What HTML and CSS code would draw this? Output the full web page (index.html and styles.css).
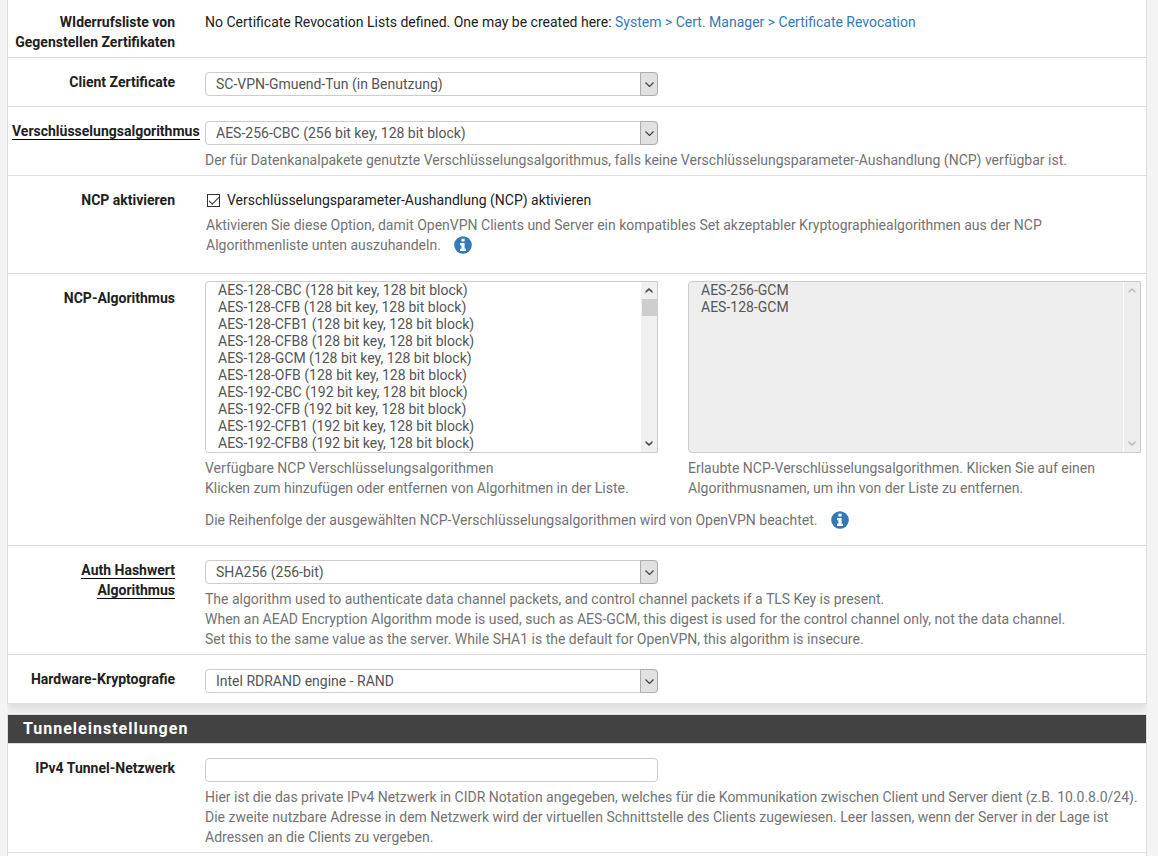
FILE: index.html
```html
<!DOCTYPE html>
<html lang="de">
<head>
<meta charset="utf-8">
<meta name="viewport" content="width=device-width, initial-scale=1">
<title>OpenVPN Client</title>
<link rel="stylesheet" href="styles.css">
</head>
<body>
<svg class="defs" aria-hidden="true">
  <symbol id="chevron" viewBox="0 0 9 5"><path d="M0.5 0.5 4.5 4.5 8.5 0.5" fill="none" stroke="currentColor" stroke-width="1.2"/></symbol>
  <symbol id="scroll-up" viewBox="0 0 8 6"><path d="M0.5 5.2V3L4 0 7.5 3V5.2L4 2.3Z" fill="currentColor"/></symbol>
  <symbol id="scroll-down" viewBox="0 0 8 6"><path d="M0.5 0.8V3L4 6 7.5 3V0.8L4 3.7Z" fill="currentColor"/></symbol>
  <symbol id="info" viewBox="0 0 18 18"><circle cx="9" cy="9" r="8.8" fill="#337ab7"/><path d="M7.4 2.8h3.2v2.6H7.4ZM6 7h4.6v5.7H12V15H6v-2.3h1.4V9.2H6Z" fill="#fff"/></symbol>
</svg>
<form class="page">
  <section class="panel panel-continued">
    <div class="row">
      <div class="name">WIderrufsliste von Gegenstellen Zertifikaten</div>
      <div class="field field-text">No Certificate Revocation Lists defined. One may be created here: <a href="#">System &gt; Cert. Manager &gt; Certificate Revocation</a></div>
    </div>
    <div class="row">
      <label class="name" for="cert">Client Zertificate</label>
      <div class="field">
        <div class="dropdown"><select id="cert"><option>SC-VPN-Gmuend-Tun (in Benutzung)</option></select><span class="arrow"><svg><use href="#chevron"/></svg></span></div>
      </div>
    </div>
    <div class="row">
      <label class="name" for="cipher"><span class="required">Verschlüsselungsalgorithmus</span></label>
      <div class="field">
        <div class="dropdown"><select id="cipher"><option>AES-256-CBC (256 bit key, 128 bit block)</option></select><span class="arrow"><svg><use href="#chevron"/></svg></span></div>
        <p class="help">Der für Datenkanalpakete genutzte Verschlüsselungsalgorithmus, falls keine Verschlüsselungsparameter-Aushandlung (NCP) verfügbar ist.</p>
      </div>
    </div>
    <div class="row">
      <div class="name">NCP aktivieren</div>
      <div class="field">
        <label class="check"><input type="checkbox" checked>Verschlüsselungsparameter-Aushandlung (NCP) aktivieren</label>
        <p class="help help-end">Aktivieren Sie diese Option, damit OpenVPN Clients und Server ein kompatibles Set akzeptabler Kryptographiealgorithmen aus der NCP Algorithmenliste unten auszuhandeln. <button type="button" class="info" aria-label="Info"><svg><use href="#info"/></svg></button></p>
      </div>
    </div>
    <div class="row">
      <div class="name">NCP-Algorithmus</div>
      <div class="field field-lists">
        <div class="lists">
          <div>
            <div class="listbox">
              <select id="available" multiple size="10">
                <option>AES-128-CBC (128 bit key, 128 bit block)</option>
                <option>AES-128-CFB (128 bit key, 128 bit block)</option>
                <option>AES-128-CFB1 (128 bit key, 128 bit block)</option>
                <option>AES-128-CFB8 (128 bit key, 128 bit block)</option>
                <option>AES-128-GCM (128 bit key, 128 bit block)</option>
                <option>AES-128-OFB (128 bit key, 128 bit block)</option>
                <option>AES-192-CBC (192 bit key, 128 bit block)</option>
                <option>AES-192-CFB (192 bit key, 128 bit block)</option>
                <option>AES-192-CFB1 (192 bit key, 128 bit block)</option>
                <option>AES-192-CFB8 (192 bit key, 128 bit block)</option>
              </select>
              <div class="scrollbar"><svg><use href="#scroll-up"/></svg><span class="thumb"></span><svg><use href="#scroll-down"/></svg></div>
            </div>
            <label class="help" for="available">Verfügbare NCP Verschlüsselungsalgorithmen<br>Klicken zum hinzufügen oder entfernen von Algorhitmen in der Liste.</label>
          </div>
          <div>
            <div class="listbox listbox-readonly">
              <select id="allowed" multiple size="10">
                <option>AES-256-GCM</option>
                <option>AES-128-GCM</option>
              </select>
              <div class="scrollbar"><svg><use href="#scroll-up"/></svg><svg><use href="#scroll-down"/></svg></div>
            </div>
            <label class="help" for="allowed">Erlaubte NCP-Verschlüsselungsalgorithmen. Klicken Sie auf einen Algorithmusnamen, um ihn von der Liste zu entfernen.</label>
          </div>
        </div>
        <p class="help help-note">Die Reihenfolge der ausgewählten NCP-Verschlüsselungsalgorithmen wird von OpenVPN beachtet. <button type="button" class="info" aria-label="Info"><svg><use href="#info"/></svg></button></p>
      </div>
    </div>
    <div class="row">
      <label class="name" for="digest"><span class="required">Auth Hashwert Algorithmus</span></label>
      <div class="field">
        <div class="dropdown"><select id="digest"><option>SHA256 (256-bit)</option></select><span class="arrow"><svg><use href="#chevron"/></svg></span></div>
        <p class="help">The algorithm used to authenticate data channel packets, and control channel packets if a TLS Key is present.<br>When an AEAD Encryption Algorithm mode is used, such as AES-GCM, this digest is used for the control channel only, not the data channel.<br>Set this to the same value as the server. While SHA1 is the default for OpenVPN, this algorithm is insecure.</p>
      </div>
    </div>
    <div class="row">
      <label class="name" for="engine">Hardware-Kryptografie</label>
      <div class="field">
        <div class="dropdown"><select id="engine"><option>Intel RDRAND engine - RAND</option></select><span class="arrow"><svg><use href="#chevron"/></svg></span></div>
      </div>
    </div>
  </section>
  <section class="panel panel-open">
    <h2>Tunneleinstellungen</h2>
    <div class="row">
      <label class="name" for="tunnel">IPv4 Tunnel-Netzwerk</label>
      <div class="field">
        <input class="textbox" id="tunnel" type="text">
        <p class="help">Hier ist die das private IPv4 Netzwerk in CIDR Notation angegeben, welches für die Kommunikation zwischen Client und Server dient (z.B. 10.0.8.0/24). Die zweite nutzbare Adresse in dem Netzwerk wird der virtuellen Schnittstelle des Clients zugewiesen. Leer lassen, wenn der Server in der Lage ist Adressen an die Clients zu vergeben.</p>
      </div>
    </div>
  </section>
</form>
</body>
</html>
```
FILE: styles.css
```css
* {
  box-sizing: border-box;
}

body {
  margin: 0;
  background: #f4f4f4;
  color: #212121;
  font: 14px/20px Roboto, sans-serif;
}

.defs {
  display: none;
}

.page {
  display: flex;
  flex-direction: column;
  gap: 10px;
  min-height: 100vh;
  padding: 0 11px 0 7px;
}

.panel {
  border: 1px solid #ddd;
  background: #fff;
  box-shadow: 0 6px 8px -1px rgba(0, 0, 0, 0.1);
  clip-path: inset(0 0 -10px 0);
}

.panel-continued {
  border-top: 0;
}

.panel-open {
  flex: 1;
  border-bottom: 0;
}

h2 {
  margin: 0;
  padding: 4px 15px;
  border-bottom: 1px solid #ddd;
  background: #424242;
  color: #fff;
  font-size: 16px;
  line-height: 20px;
  font-weight: 700;
  letter-spacing: 1px;
}

.row {
  display: grid;
  grid-template-columns: 182px 1fr;
  padding: 14px 0 5px;
  border-bottom: 1px solid #ddd;
}

.panel-continued .row:first-child {
  padding-top: 12px;
}

.panel-continued .row:last-child {
  border-bottom: 0;
}

.name {
  padding: 0 15px 0 4px;
  font-weight: 700;
  text-align: right;
}

.required {
  border-bottom: 1px solid #000;
}

.field {
  min-width: 0;
  padding: 0 5px 0 15px;
}

.field-lists {
  margin-top: -7px;
}

a {
  color: #337ab7;
  text-decoration: none;
}

.dropdown,
.listbox {
  position: relative;
  margin-bottom: 5px;
}

.dropdown,
.textbox {
  width: calc(50% - 15px);
}

.dropdown select,
.textbox {
  display: block;
  height: 24px;
  border: 1px solid #ccc;
  border-radius: 4px;
  background: #fff;
  color: #555;
  font: inherit;
}

.dropdown select {
  width: 100%;
  padding: 0 20px 0 10px;
  appearance: none;
}

.textbox {
  margin-bottom: 5px;
  padding: 0 10px;
}

.arrow {
  position: absolute;
  top: 0;
  right: 0;
  bottom: 0;
  display: grid;
  place-items: center;
  width: 18px;
  border: 1px solid #adadad;
  border-radius: 0 4px 4px 0;
  background: #e1e1e1;
  color: #444;
  pointer-events: none;
}

.arrow svg {
  width: 9px;
  height: 5px;
}

.help {
  display: block;
  margin: 0;
  color: #737373;
}

.help-end {
  margin-bottom: 11px;
  padding-left: 1px;
}

.help-note {
  margin: 12px 0 8px;
}

.check {
  display: flex;
  align-items: center;
  gap: 7px;
  margin-bottom: 5px;
  padding-left: 1px;
}

.check input {
  display: grid;
  place-items: center;
  width: 13px;
  height: 13px;
  margin: 0 0 0 1px;
  border: 1px solid #333;
  background: #fff;
  appearance: none;
}

.check input:checked::before {
  width: 9px;
  height: 4px;
  border: solid #333;
  border-width: 0 0 1px 1px;
  content: "";
  transform: translateY(-1px) rotate(-45deg);
}

.info {
  height: 22px;
  margin-left: 10px;
  padding: 1px 0 3px;
  border: 0;
  background: none;
  vertical-align: -4px;
}

.info svg {
  display: block;
  width: 18px;
  height: 18px;
}

.lists {
  display: grid;
  grid-template-columns: 1fr 1fr;
  gap: 30px;
}

.listbox select {
  display: block;
  width: 100%;
  height: 172px;
  padding: 0;
  border: 1px solid #ccc;
  border-radius: 4px 0 0 4px;
  background: #fff;
  color: #555;
  font: inherit;
  scrollbar-width: none;
}

.listbox option {
  min-height: 17px;
  padding: 0 12px;
  line-height: 17px;
}

.scrollbar {
  position: absolute;
  top: 1px;
  right: 1px;
  bottom: 1px;
  display: flex;
  flex-direction: column;
  align-items: center;
  width: 16px;
  padding: 6px 0;
  background: #f0f0f0;
  color: #505050;
}

.scrollbar svg {
  width: 8px;
  height: 6px;
}

.scrollbar svg:last-child {
  margin-top: auto;
}

.thumb {
  width: 15px;
  height: 17px;
  margin-top: 5px;
  background: #cdcdcd;
}

.listbox-readonly select,
.listbox-readonly .scrollbar {
  background: #eee;
}

.listbox-readonly .scrollbar {
  width: 17px;
  border-left: 1px solid #fff;
  color: #bfbfbf;
}
```
